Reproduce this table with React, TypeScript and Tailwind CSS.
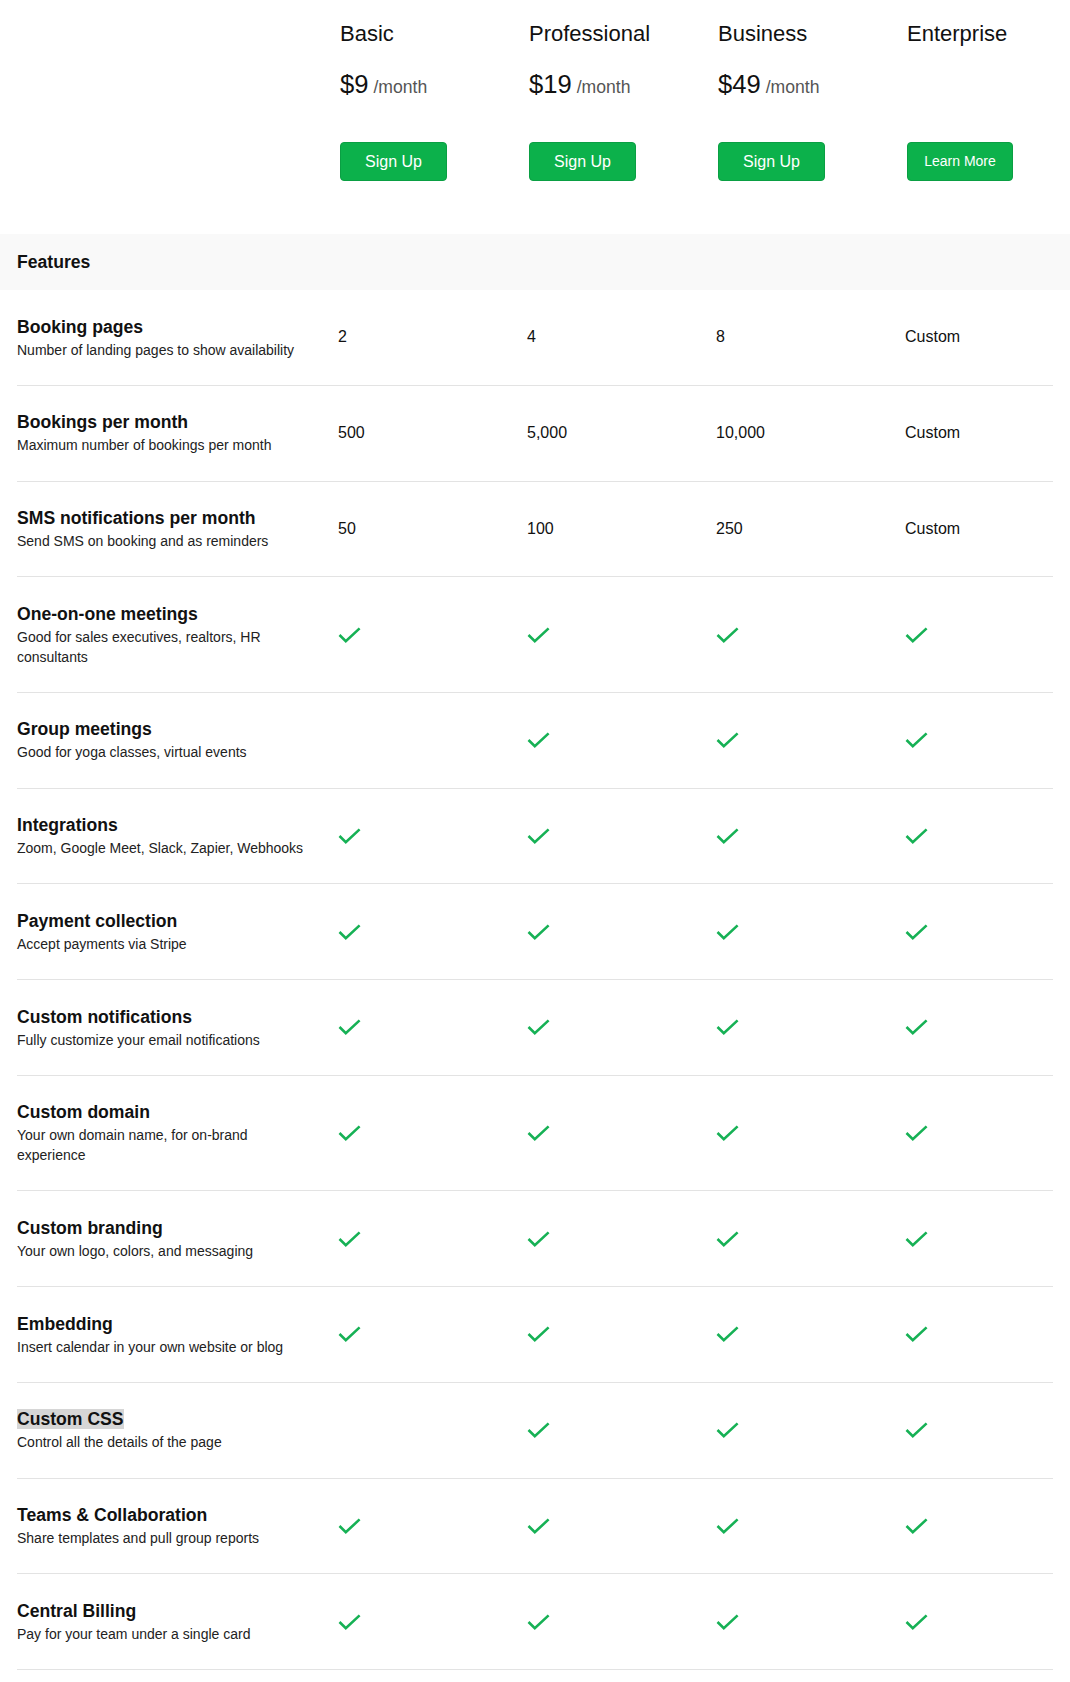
import React from 'react'

type Plan = {
  name: string
  price?: string
  cta: string
}

type Feature = {
  title: string
  description: string
  values: (string | boolean)[]
  highlight?: boolean
}

const plans: Plan[] = [
  { name: 'Basic', price: '$9', cta: 'Sign Up' },
  { name: 'Professional', price: '$19', cta: 'Sign Up' },
  { name: 'Business', price: '$49', cta: 'Sign Up' },
  { name: 'Enterprise', cta: 'Learn More' },
]

const features: Feature[] = [
  { title: 'Booking pages', description: 'Number of landing pages to show availability', values: ['2', '4', '8', 'Custom'] },
  { title: 'Bookings per month', description: 'Maximum number of bookings per month', values: ['500', '5,000', '10,000', 'Custom'] },
  { title: 'SMS notifications per month', description: 'Send SMS on booking and as reminders', values: ['50', '100', '250', 'Custom'] },
  { title: 'One-on-one meetings', description: 'Good for sales executives, realtors, HR consultants', values: [true, true, true, true] },
  { title: 'Group meetings', description: 'Good for yoga classes, virtual events', values: [false, true, true, true] },
  { title: 'Integrations', description: 'Zoom, Google Meet, Slack, Zapier, Webhooks', values: [true, true, true, true] },
  { title: 'Payment collection', description: 'Accept payments via Stripe', values: [true, true, true, true] },
  { title: 'Custom notifications', description: 'Fully customize your email notifications', values: [true, true, true, true] },
  { title: 'Custom domain', description: 'Your own domain name, for on-brand experience', values: [true, true, true, true] },
  { title: 'Custom branding', description: 'Your own logo, colors, and messaging', values: [true, true, true, true] },
  { title: 'Embedding', description: 'Insert calendar in your own website or blog', values: [true, true, true, true] },
  { title: 'Custom CSS', description: 'Control all the details of the page', values: [false, true, true, true], highlight: true },
  { title: 'Teams & Collaboration', description: 'Share templates and pull group reports', values: [true, true, true, true] },
  { title: 'Central Billing', description: 'Pay for your team under a single card', values: [true, true, true, true] },
]

const cols = 'grid grid-cols-[321px_189px_189px_189px_1fr]'

function Check() {
  return (
    <svg width="23" height="16" viewBox="0 0 23 16" fill="none" aria-hidden="true">
      <polyline points="1.5,8 7.8,14.2 21.6,1.4" stroke="#16b155" strokeWidth="2.6" strokeLinecap="butt" strokeLinejoin="miter" />
    </svg>
  )
}

function PlanHeader({ plan }: { plan: Plan }) {
  const isLearn = plan.cta === 'Learn More'
  return (
    <div className="flex flex-col">
      <div className="h-[28px] pl-[2px] text-[22px] leading-[28px] text-[#111]">{plan.name}</div>
      <div className="mt-[20px] flex h-[32px] items-baseline pl-[2px] leading-[32px]">
        {plan.price && (
          <>
            <span className="text-[25.6px] text-[#111]">{plan.price}</span>
            <span className="ml-[5px] text-[17.6px] text-[#555]">/month</span>
          </>
        )}
      </div>
      <button
        className={
          'mt-[42px] ml-[2px] flex h-[39px] items-center justify-center rounded-[4px] border border-[#0a9f43] bg-[#0cb14b] text-white ' +
          (isLearn ? 'w-[106px] text-[14px]' : 'w-[107px] text-[16px]')
        }
      >
        {plan.cta}
      </button>
    </div>
  )
}

export default function App() {
  return (
    <div className="min-h-[1682px] w-full bg-white text-[#111]" style={{ fontFamily: '"Liberation Sans", Arial, sans-serif' }}>
      <div className={`${cols} px-[17px] pt-[20px] pb-[53px]`}>
        <div />
        {plans.map((p) => (
          <PlanHeader key={p.name} plan={p} />
        ))}
      </div>

      <div className="flex h-[56px] items-center bg-[#f9f9f9] px-[17px]">
        <span className="text-[17.6px] font-bold text-[#111]">Features</span>
      </div>

      <div className="px-[17px]">
        {features.map((f) => (
          <div key={f.title} className={`${cols} items-center border-b border-[#e3e3e3] py-[24.6px]`}>
            <div className="pr-[20px]">
              <div className="text-[17.6px] font-bold leading-[24px] text-[#111]">
                {f.highlight ? <span className="bg-[#d6d6d6]">{f.title}</span> : f.title}
              </div>
              <div className="mt-[2px] text-[14px] leading-[19.6px] text-[#222]">{f.description}</div>
            </div>
            {f.values.map((v, i) => (
              <div key={i} className="flex items-center text-[16px] text-[#111]">
                {v === true ? <Check /> : v === false ? null : <span>{v}</span>}
              </div>
            ))}
          </div>
        ))}
      </div>
    </div>
  )
}
